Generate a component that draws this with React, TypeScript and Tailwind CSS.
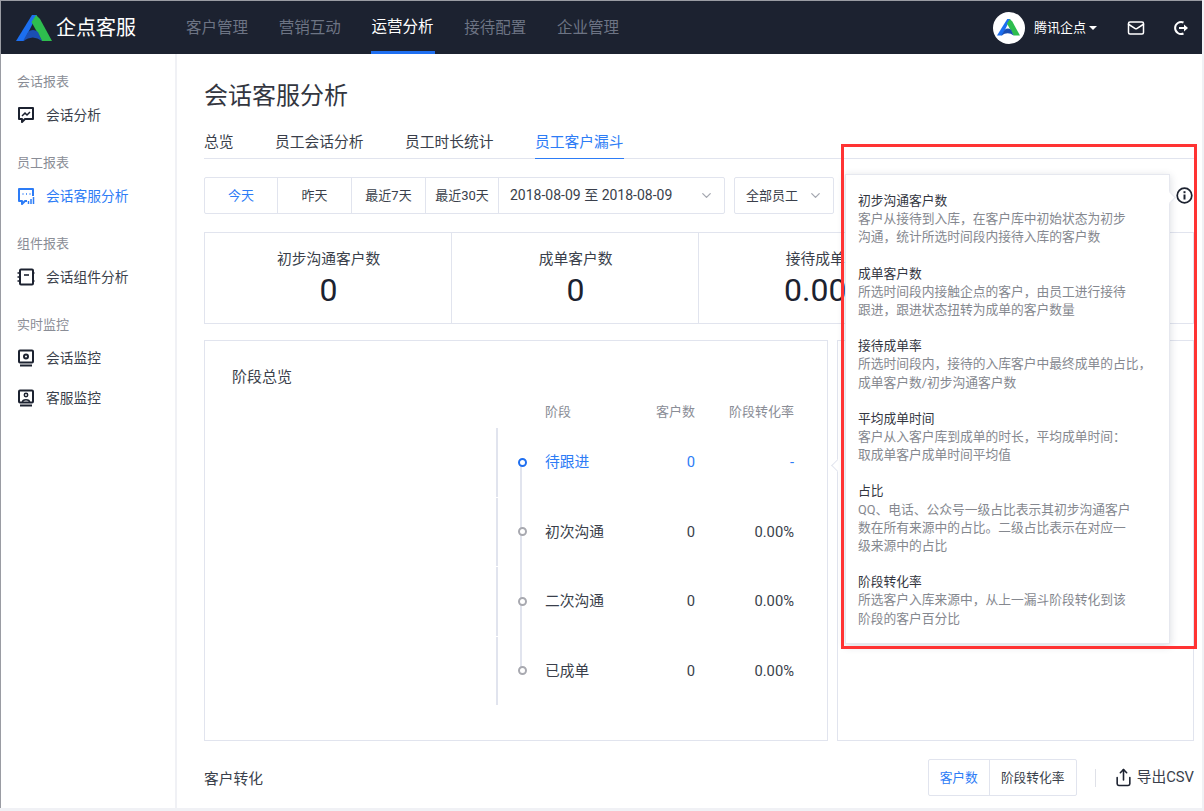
import { ChevronDown, Mail, Share } from "lucide-react";
import type { ReactNode } from "react";

const FONT = 'Roboto, "Noto Sans CJK SC", sans-serif';

function Logo({ size = 36 }: { size?: number }) {
  return (
    <svg width={size} height={(size * 26) / 36} viewBox="0 0 36 26">
      <polygon points="16,0 21,0 8,26 0,26" fill="#1c6ff0" />
      <polygon points="20,0 24,4 36,26 26,26 15.5,7" fill="#2ebd4e" />
      <path d="M7 26 L12 17 Q17 13 22 17 L26 26 Q17 19 7 26 Z" fill="#1b4fb3" />
    </svg>
  );
}

function ChatLine() {
  return (
    <svg width="18" height="18" viewBox="0 0 18 18" fill="none" stroke="#1c2230" strokeWidth="2">
      <path d="M2 2h14v11H8l-3 3v-3H2z" strokeLinejoin="round" />
      <path d="M5 10l3-3 2 2 3-3" strokeWidth="1.5" />
    </svg>
  );
}
function ChatBars() {
  return (
    <svg width="18" height="18" viewBox="0 0 18 18" fill="none" stroke="#2d7cf6" strokeWidth="2">
      <path d="M10 14H8l-3 3v-3H2V2h14v7" strokeLinejoin="round" />
      <path d="M5.5 7h1M9 7h1M12.500 7h1" strokeWidth="1.600" />
      <path d="M11.500 17v-3M14 17v-5M16.500 17v-7" strokeWidth="1.500" />
    </svg>
  );
}
function Notebook() {
  return (
    <svg width="18" height="18" viewBox="0 0 18 18" fill="none" stroke="#1c2230" strokeWidth="2">
      <rect x="3" y="1.500" width="13" height="15" rx="1" />
      <path d="M7 7h5" strokeWidth="1.600" />
      <path d="M0.500 5h3M0.500 9h3M0.500 13h3M15 5h2.500M15 13h2.500" strokeWidth="1.600" />
    </svg>
  );
}
function MonitorCircle() {
  return (
    <svg width="18" height="18" viewBox="0 0 18 18" fill="none" stroke="#1c2230" strokeWidth="2">
      <rect x="2" y="1.500" width="14" height="12" rx="1" />
      <circle cx="9" cy="7.500" r="2" />
      <path d="M3 16.500h12" />
    </svg>
  );
}
function MonitorPerson() {
  return (
    <svg width="18" height="18" viewBox="0 0 18 18" fill="none" stroke="#1c2230" strokeWidth="2">
      <rect x="2" y="1.500" width="14" height="12" rx="1" />
      <circle cx="9" cy="6" r="1.700" strokeWidth="1.500" />
      <path d="M5.500 13c0-3 7-3 7 0" strokeWidth="1.500" />
      <path d="M3 16.500h12" />
    </svg>
  );
}
function Logout() {
  return (
    <svg width="16" height="16" viewBox="0 0 16 16" fill="none" stroke="#fff" strokeWidth="2">
      <path d="M10.500 2.500A6 6 0 1 0 10.500 13.500" />
      <path d="M6 8h6" />
      <path d="M11 4.500L15 8l-4 3.500z" fill="#fff" stroke="none" />
    </svg>
  );
}
function Info() {
  return (
    <svg width="17" height="17" viewBox="0 0 17 17" fill="none" stroke="#1c2230" strokeWidth="1.700">
      <circle cx="8.500" cy="8.500" r="7.300" />
      <path d="M8.500 7.500v5" strokeWidth="2" />
      <path d="M8.500 4.200v2" strokeWidth="2" />
    </svg>
  );
}

const NAV = ["客户管理", "营销互动", "运营分析", "接待配置", "企业管理"];

function Header() {
  return (
    <header className="flex h-[53px] items-center bg-[#1c2230] pl-[15px] pr-[13px] text-white">
      <Logo />
      <span className="ml-[4px] w-[129px] text-[20px] leading-[28px]">企点客服</span>
      <nav className="flex h-full gap-[28.750px]">
        {NAV.map((n, i) => (
          <span
            key={n}
            className={
              i === 2
                ? "flex h-full w-[64px] items-center justify-center border-b-[3px] border-[#1f6ff0] pt-[4px] text-[15.500px] text-white"
                : "flex h-full w-[64px] items-center justify-center pt-[2px] text-[15.500px] text-[#6d7484]"
            }
          >
            {n}
          </span>
        ))}
      </nav>
      <div className="ml-auto flex items-center">
        <span className="flex h-[32px] w-[32px] items-center justify-center rounded-full bg-white">
          <Logo size={23} />
        </span>
        <span className="ml-[9px] text-[13px]">腾讯企点</span>
        <span className="ml-[3px] h-0 w-0 border-x-[4px] border-t-[4px] border-x-transparent border-t-white" />
        <Mail size={18} strokeWidth={2} className="ml-[30px]" />
        <span className="ml-[28px] flex"><Logout /></span>
      </div>
    </header>
  );
}

function Group({ label, items }: { label: string; items: { icon: ReactNode; text: string; active?: boolean }[] }) {
  return (
    <div className="mb-[15px]">
      <div className="flex h-[26px] items-center pl-[16px] text-[13px] text-[#8a8d96]">{label}</div>
      {items.map((it) => (
        <div key={it.text} className="flex h-[40px] items-center pl-[16px]">
          <span className="flex w-[29px]">{it.icon}</span>
          <span className={it.active ? "text-[13.750px] text-[#2d7cf6]" : "text-[13.750px] text-[#3a3f4b]"}>{it.text}</span>
        </div>
      ))}
    </div>
  );
}

function Sidebar() {
  return (
    <aside className="w-[176px] shrink-0 border-r-2 border-[#f0f1f5] pt-[15px]">
      <Group label="会话报表" items={[{ icon: <ChatLine />, text: "会话分析" }]} />
      <Group label="员工报表" items={[{ icon: <ChatBars />, text: "会话客服分析", active: true }]} />
      <Group label="组件报表" items={[{ icon: <Notebook />, text: "会话组件分析" }]} />
      <Group
        label="实时监控"
        items={[
          { icon: <MonitorCircle />, text: "会话监控" },
          { icon: <MonitorPerson />, text: "客服监控" },
        ]}
      />
    </aside>
  );
}

const SEG: [string, string][] = [
  ["今天", "w-[73px]"],
  ["昨天", "w-[74px]"],
  ["最近7天", "w-[74px]"],
  ["最近30天", "w-[73px]"],
];

function Filters() {
  return (
    <div className="mt-[18px] flex h-[37px] items-stretch text-[13px] text-[#3a3f4b]">
      <div className="flex w-[521px] rounded-[2px] border border-[#e1e4ee]">
        {SEG.map(([t, w], i) => (
          <span
            key={t}
            className={`flex ${w} items-center justify-center border-r border-[#e1e4ee] ${i === 0 ? "text-[#2d7cf6]" : ""}`}
          >
            {t}
          </span>
        ))}
        <span className="flex flex-1 items-center justify-between pl-[11px] pr-[10px] text-[14px]">
          2018-08-09 至 2018-08-09
          <ChevronDown size={15} className="text-[#a4a7b0]" />
        </span>
      </div>
      <div className="ml-[9px] flex w-[100px] items-center justify-between rounded-[2px] border border-[#e1e4ee] pl-[11px] pr-[10px]">
        全部员工
        <ChevronDown size={15} className="text-[#a4a7b0]" />
      </div>
    </div>
  );
}

const STATS: [string, ReactNode][] = [
  ["初步沟通客户数", "0"],
  ["成单客户数", "0"],
  ["接待成单率", <>0.00<span className="text-[20px]">%</span></>],
];

function Stats() {
  return (
    <div className="mt-[18px] grid h-[92px] grid-cols-4 border border-[#e1e4ee]">
      {STATS.map(([l, v]) => (
        <div key={l} className="border-r border-[#e1e4ee] pl-[1px] pt-[15px] text-center">
          <div className="text-[14.750px] leading-[22px] text-[#3a3f4b]">{l}</div>
          <div className="text-[32px] leading-[40px] text-[#1c2230]">{v}</div>
        </div>
      ))}
      <div />
    </div>
  );
}

const ROWS = [
  ["待跟进", "0", "-"],
  ["初次沟通", "0", "0.00%"],
  ["二次沟通", "0", "0.00%"],
  ["已成单", "0", "0.00%"],
];

function Funnel() {
  return (
    <div className="flex flex-1 flex-col border border-[#e1e4ee] pl-[27px] pr-[33px] pt-[25px]">
      <div className="text-[15px] leading-[22px] text-[#3a3f4b]">阶段总览</div>
      <div className="mt-[14px] w-[298px] self-end">
        <div className="mb-[6px] flex h-[20px] items-center pl-[49px] text-[13px] text-[#8a8d96]">
          <span className="w-[110px]">阶段</span>
          <span className="w-[40px] text-right">客户数</span>
          <span className="w-[99px] text-right">阶段转化率</span>
        </div>
        <div className="relative">
          <span className="absolute left-[24px] top-[34px] h-[208px] w-[2px] bg-[#e1e4ee]" />
          {ROWS.map(([n, c, r], i) => (
            <div
              key={n}
              className={`relative mb-[1px] flex h-[68.500px] items-center border-l-2 border-[#e1e4ee] pl-[19.500px] text-[14.750px] ${
                i === 0 ? "text-[#2d7cf6]" : "text-[#3a3f4b]"
              }`}
            >
              <span
                className={`box-border h-[9px] w-[9px] rounded-full border-2 bg-white ${
                  i === 0 ? "border-[#1f6ff0]" : "border-[#a8a9b0]"
                }`}
              />
              <span className="ml-[18.500px] w-[110px]">{n}</span>
              <span className="w-[40px] text-right">{c}</span>
              <span className="w-[99px] text-right">{r}</span>
            </div>
          ))}
        </div>
      </div>
    </div>
  );
}

const HELP: [string, string[]][] = [
  ["初步沟通客户数", ["客户从接待到入库，在客户库中初始状态为初步", "沟通，统计所选时间段内接待入库的客户数"]],
  ["成单客户数", ["所选时间段内接触企点的客户，由员工进行接待", "跟进，跟进状态扭转为成单的客户数量"]],
  ["接待成单率", ["所选时间段内，接待的入库客户中最终成单的占比，", "成单客户数/初步沟通客户数"]],
  ["平均成单时间", ["客户从入客户库到成单的时长，平均成单时间：", "取成单客户成单时间平均值"]],
  ["占比", ["QQ、电话、公众号一级占比表示其初步沟通客户", "数在所有来源中的占比。二级占比表示在对应一", "级来源中的占比"]],
  ["阶段转化率", ["所选客户入库来源中，从上一漏斗阶段转化到该", "阶段的客户百分比"]],
];

function Popover() {
  return (
    <div className="absolute left-[844px] top-[173px] h-[470px] w-[325px] border border-[#e6e8ef] bg-white pl-[12px] pt-[17px] shadow-[0_2px_8px_rgba(40,50,80,0.18)]">
      {HELP.map(([h, lines]) => (
        <div key={h} className="mb-[18px] whitespace-nowrap text-[12.750px] leading-[18.200px]">
          <div className="text-[#33363f]">{h}</div>
          {lines.map((l) => (
            <div key={l} className="text-[#85888f]">{l}</div>
          ))}
        </div>
      ))}
      <span className="absolute -right-[5px] top-[18px] h-[9px] w-[9px] rotate-45 border-r border-t border-[#e6e8ef] bg-white" />
    </div>
  );
}

export default function App() {
  return (
    <div className="h-[811px] w-[1204px] overflow-hidden bg-[#f0f1f5]" style={{ fontFamily: FONT }}>
      <div className="relative h-[808px] w-[1202px] border-l border-t border-[#9a9ca3] bg-white">
        <Header />
        <div className="flex h-[754px]">
          <Sidebar />
          <main className="min-w-0 flex-1 pl-[27px] pr-[8px] pt-[26px]">
            <h1 className="text-[24px] leading-[32px] font-normal text-[#33363f]">会话客服分析</h1>
            <div className="mt-[14px] flex h-[33px] gap-[41.500px] border-b border-[#e1e4ee] text-[14.750px] text-[#3a3f4b]">
              <span className="pt-[5px]">总览</span>
              <span className="pt-[5px]">员工会话分析</span>
              <span className="pt-[5px]">员工时长统计</span>
              <span className="-mb-px border-b border-[#2d7cf6] pt-[5px] text-[#2d7cf6]">员工客户漏斗</span>
            </div>
            <Filters />
            <Stats />
            <div className="mt-[16px] flex h-[401px] gap-[9px]">
              <Funnel />
              <div className="relative w-[357px] shrink-0 border border-[#e1e4ee]">
                <span className="absolute -left-[5px] top-[120px] h-[9px] w-[9px] rotate-45 border-b border-l border-[#e1e4ee] bg-white" />
              </div>
            </div>
            <div className="mt-[18px] flex h-[37px] items-center">
              <span className="pt-[4px] text-[14.750px] text-[#3a3f4b]">客户转化</span>
              <div className="ml-auto flex h-full rounded-[2px] border border-[#e1e4ee] text-[12.750px]">
                <span className="flex w-[61px] items-center justify-center border-r border-[#e1e4ee] text-[#2d7cf6]">客户数</span>
                <span className="flex w-[86px] items-center justify-center text-[#3a3f4b]">阶段转化率</span>
              </div>
              <span className="ml-[18px] h-[18px] w-px bg-[#dfe1e8]" />
              <Share size={19} strokeWidth={2} className="ml-[18px] text-[#1c2230]" />
              <span className="ml-[4px] text-[14.750px] text-[#3a3f4b]">导出CSV</span>
            </div>
          </main>
        </div>
        <Popover />
        <span className="absolute left-[1175px] top-[186px] flex"><Info /></span>
        <div className="pointer-events-none absolute left-[840px] top-[143px] h-[505px] w-[356px] border-[3px] border-[#ff3333]" />
      </div>
    </div>
  );
}
